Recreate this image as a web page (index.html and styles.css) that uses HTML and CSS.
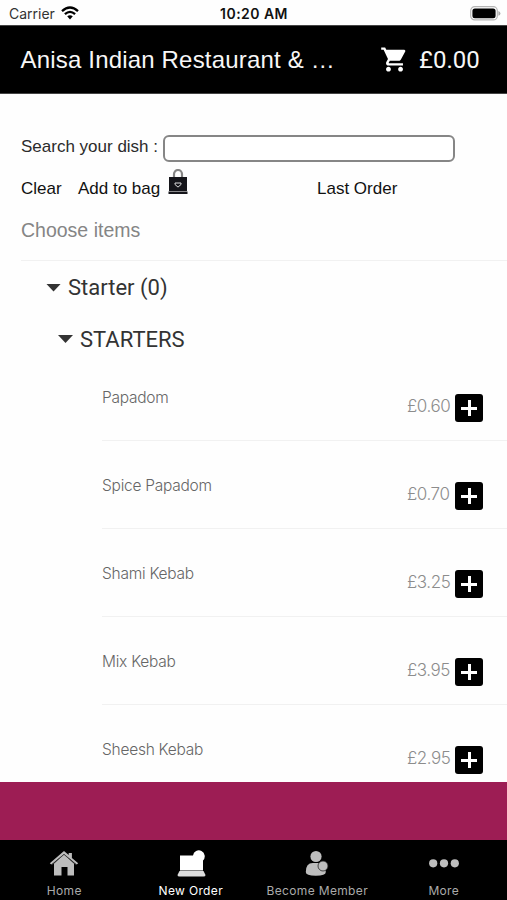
FILE: index.html
```html
<!DOCTYPE html>
<html lang="en">
<head>
<meta charset="utf-8">
<title>Anisa Indian Restaurant</title>
<link rel="stylesheet" href="styles.css">
</head>
<body>
<div class="status">
  <div class="carrier"><span class="carrier-name">Carrier</span>
    <svg class="wifi" width="18" height="14" viewBox="0 0 18 14"><g fill="none" stroke="#000" stroke-width="2.3"><path d="M1 5.1Q9-2.1 17 5.1"/><path d="M3.9 8.2Q9 3.6 14.1 8.2"/></g><path d="M6.2 10.3Q9 8.2 11.8 10.3L9 13.4z"/></svg>
  </div>
  <span class="time">10:20 AM</span>
  <svg class="battery" width="31" height="15" viewBox="0 0 31 15"><rect x=".7" y=".7" width="26.6" height="13.2" rx="4" fill="#fff" stroke="#b5b5b5" stroke-width="1.2"/><rect x="2.4" y="2.4" width="23.2" height="9.8" rx="2.5"/><path d="M28.4 5q2 .6 2 2.4t-2 2.4z" fill="#aaa"/></svg>
</div>
<header class="header">
  <h1 class="title">Anisa Indian Restaurant &amp; …</h1>
  <svg class="cart" width="29" height="29" viewBox="0 0 24 24" fill="#fff"><path d="M7 18c-1.1 0-1.99.9-1.99 2S5.9 22 7 22s2-.9 2-2-.9-2-2-2zM1 2v2h2l3.6 7.59-1.35 2.45c-.16.28-.25.61-.25.96 0 1.1.9 2 2 2h12v-2H7.42c-.14 0-.25-.11-.25-.25l.03-.12.9-1.63h7.45c.75 0 1.41-.41 1.75-1.03l3.58-6.49A1 1 0 0 0 20 4H5.21l-.94-2H1zm16 16c-1.1 0-1.99.9-1.99 2s.89 2 1.99 2 2-.9 2-2-.9-2-2-2z"/></svg>
  <span class="total">£0.00</span>
</header>
<main class="content">
  <div class="search"><label class="label" for="dish">Search your dish :</label><input class="input" id="dish" type="text"></div>
  <div class="actions">
    <span class="clear">Clear</span><span class="add">Add to bag</span>
    <svg class="bag" width="20" height="26" viewBox="0 0 20 26"><path d="M6 9V5a4 4 0 0 1 8 0v4" fill="none" stroke="#858585" stroke-width="2.2"/><path d="M1 8h18v14H1zM.5 22.600h19V25H.5z" fill="#15151a"/><path d="M7 14h6v1.500l-3 2.600-3-2.600z" fill="none" stroke="#ddd" stroke-width="1"/></svg>
    <span class="last">Last Order</span>
  </div>
  <div class="choose">Choose items</div>
  <section class="menu">
    <h2 class="group"><i class="arrow"></i><span class="group-name">Starter (0)</span></h2>
    <h3 class="group sub"><i class="arrow"></i><span class="sub-name">STARTERS</span></h3>
    <ul class="items">
      <li class="item"><span class="name">Papadom</span><span class="price">£0.60</span><span class="plus"></span></li>
      <li class="item"><span class="name">Spice Papadom</span><span class="price">£0.70</span><span class="plus"></span></li>
      <li class="item"><span class="name">Shami Kebab</span><span class="price">£3.25</span><span class="plus"></span></li>
      <li class="item"><span class="name">Mix Kebab</span><span class="price">£3.95</span><span class="plus"></span></li>
      <li class="item"><span class="name">Sheesh Kebab</span><span class="price">£2.95</span><span class="plus"></span></li>
    </ul>
  </section>
</main>
<div class="banner"></div>
<nav class="tabs">
  <div class="tab"><svg width="32" height="28" viewBox="0 0 32 28"><path d="M6 14.500 16 5.500l10 9V26.500h-6.500v-8.500h-6v8.500H6z" fill="#bdbdbd"/><path d="M1.800 14.300 16 2l4.700 4V4h3.200v4.900l6.300 5.400-1.500 1.300L16 4.900 3.300 15.600z" fill="#bdbdbd"/><path d="M4.300 15.600 16 5.400l11.700 10.200" fill="none" stroke="#444" stroke-width=".7"/></svg><span>Home</span></div>
  <div class="tab active"><svg width="32" height="28" viewBox="0 0 32 28"><path d="M5 6.500h13a5.900 5.900 0 1 1 10 5V21.500H5z" fill="#fff"/><path d="M4.500 22h24l2 4q0 1.500-2 1.500h-24q-2 0-2-1.500z" fill="#ddd"/></svg><span>New Order</span></div>
  <div class="tab"><svg width="32" height="28" viewBox="0 0 32 28" fill="#bebebe"><circle cx="15" cy="7.500" r="5.600"/><path d="M4.800 23q0-9 7-9h6q7 0 7 9 0 3.800-10 3.800T4.800 23z"/><circle cx="22" cy="17" r="5" stroke="#222" stroke-width=".8"/></svg><span>Become Member</span></div>
  <div class="tab"><svg width="32" height="28" viewBox="0 0 32 28" fill="#bebebe"><circle cx="5.200" cy="14.300" r="4.100"/><circle cx="16" cy="14.300" r="4.100"/><circle cx="26.800" cy="14.300" r="4.100"/></svg><span>More</span></div>
</nav>
</body>
</html>
```
FILE: styles.css
```css
* { box-sizing: border-box; }
body { margin: 0; height: 900px; overflow: hidden; display: flex; flex-direction: column; background: #fefefe; font-family: "Liberation Sans", sans-serif; }
span, label, h1, .choose { white-space: nowrap; }
.status { height: 26px; flex: none; display: grid; grid-template-columns: 1fr auto 1fr; align-items: center; padding: 1px 6px 0 9px; font-family: Inter, sans-serif; border-bottom: 1px solid #444; }
.carrier { display: flex; align-items: center; gap: 6px; font-size: 14px; color: #333; }
.time { margin-right: 2px; font-size: 14px; font-weight: 600; letter-spacing: .45px; color: #111; }
.battery { justify-self: end; }
.header { height: 68px; flex: none; display: flex; align-items: center; background: #000; color: #f7f7f7; padding-left: 20.500px; border-bottom: 1px solid #444; }
.title { margin: 0; width: 359.500px; font-size: 24px; font-weight: 400; letter-spacing: .18px; }
.cart { margin-right: 10px; flex: none; }
.total { font: 24px Roboto, sans-serif; }
.content { flex: 1; min-height: 0; overflow: hidden; padding-top: 41px; }
.search { height: 26px; display: flex; padding-left: 21px; }
.label { width: 142px; font-size: 17px; line-height: 24px; color: #2b2b2b; }
.input { width: 292px; height: 27px; border: 2px solid #868686; border-radius: 6px; background: #fff; padding: 0 6px; }
.actions { height: 36px; display: flex; padding-left: 21px; font-size: 17px; line-height: 55px; color: #111; }
.clear { width: 57px; }
.add { width: 90px; }
.bag { margin-top: 8px; width: 20px; height: 26px; flex: none; }
.last { margin-left: 129px; }
.choose { height: 64px; margin-left: 21px; padding-top: 21px; font-size: 19.500px; line-height: 24px; color: #858585; border-bottom: 1px solid #f1f1f1; }
.menu { font-family: Roboto, sans-serif; }
.group { margin: 0; height: 52px; display: flex; align-items: center; gap: 7px; padding: 1px 0 0 46px; font-size: 22px; font-weight: 400; color: #333; }
.sub { padding: 0 0 0 58px; }
.arrow { width: 15px; height: 8px; background: #333; clip-path: polygon(0 0, 100% 0, 50% 100%); }
.items { list-style: none; margin: 0; padding: 0 0 0 102px; font-family: Inter, sans-serif; font-weight: 300; }
.item { height: 88px; display: flex; padding-right: 24px; border-bottom: 1px solid #f1f1f1; }
.item:first-child { height: 76px; }
.item:first-child .name { padding-top: 23px; }
.item:first-child .price { padding-top: 29px; }
.item:first-child .plus { margin-top: 29px; }
.name { flex: 1; padding-top: 35px; font-size: 15.500px; line-height: 20px; color: #666; letter-spacing: -.25px; }
.price { width: 48px; padding-top: 41px; font-size: 17px; line-height: 24px; color: #8c8c8c; letter-spacing: -.45px; }
.plus { flex: none; width: 28px; height: 28px; margin-top: 41px; border-radius: 3px; background: linear-gradient(#fff, #fff) center / 16px 3px no-repeat, linear-gradient(#fff, #fff) center / 3px 16px no-repeat, #000; }
.banner { height: 58px; flex: none; background: #9d1d54; }
.tabs { height: 60px; flex: none; display: grid; grid-template-columns: repeat(4, 126.500px); padding-left: 1px; background: #000; }
.tab { display: flex; flex-direction: column; align-items: center; padding-top: 9px; gap: 5px; font: 12px/18px Inter, sans-serif; color: #aaa; letter-spacing: .35px; }
.active { color: #fff; }
```
